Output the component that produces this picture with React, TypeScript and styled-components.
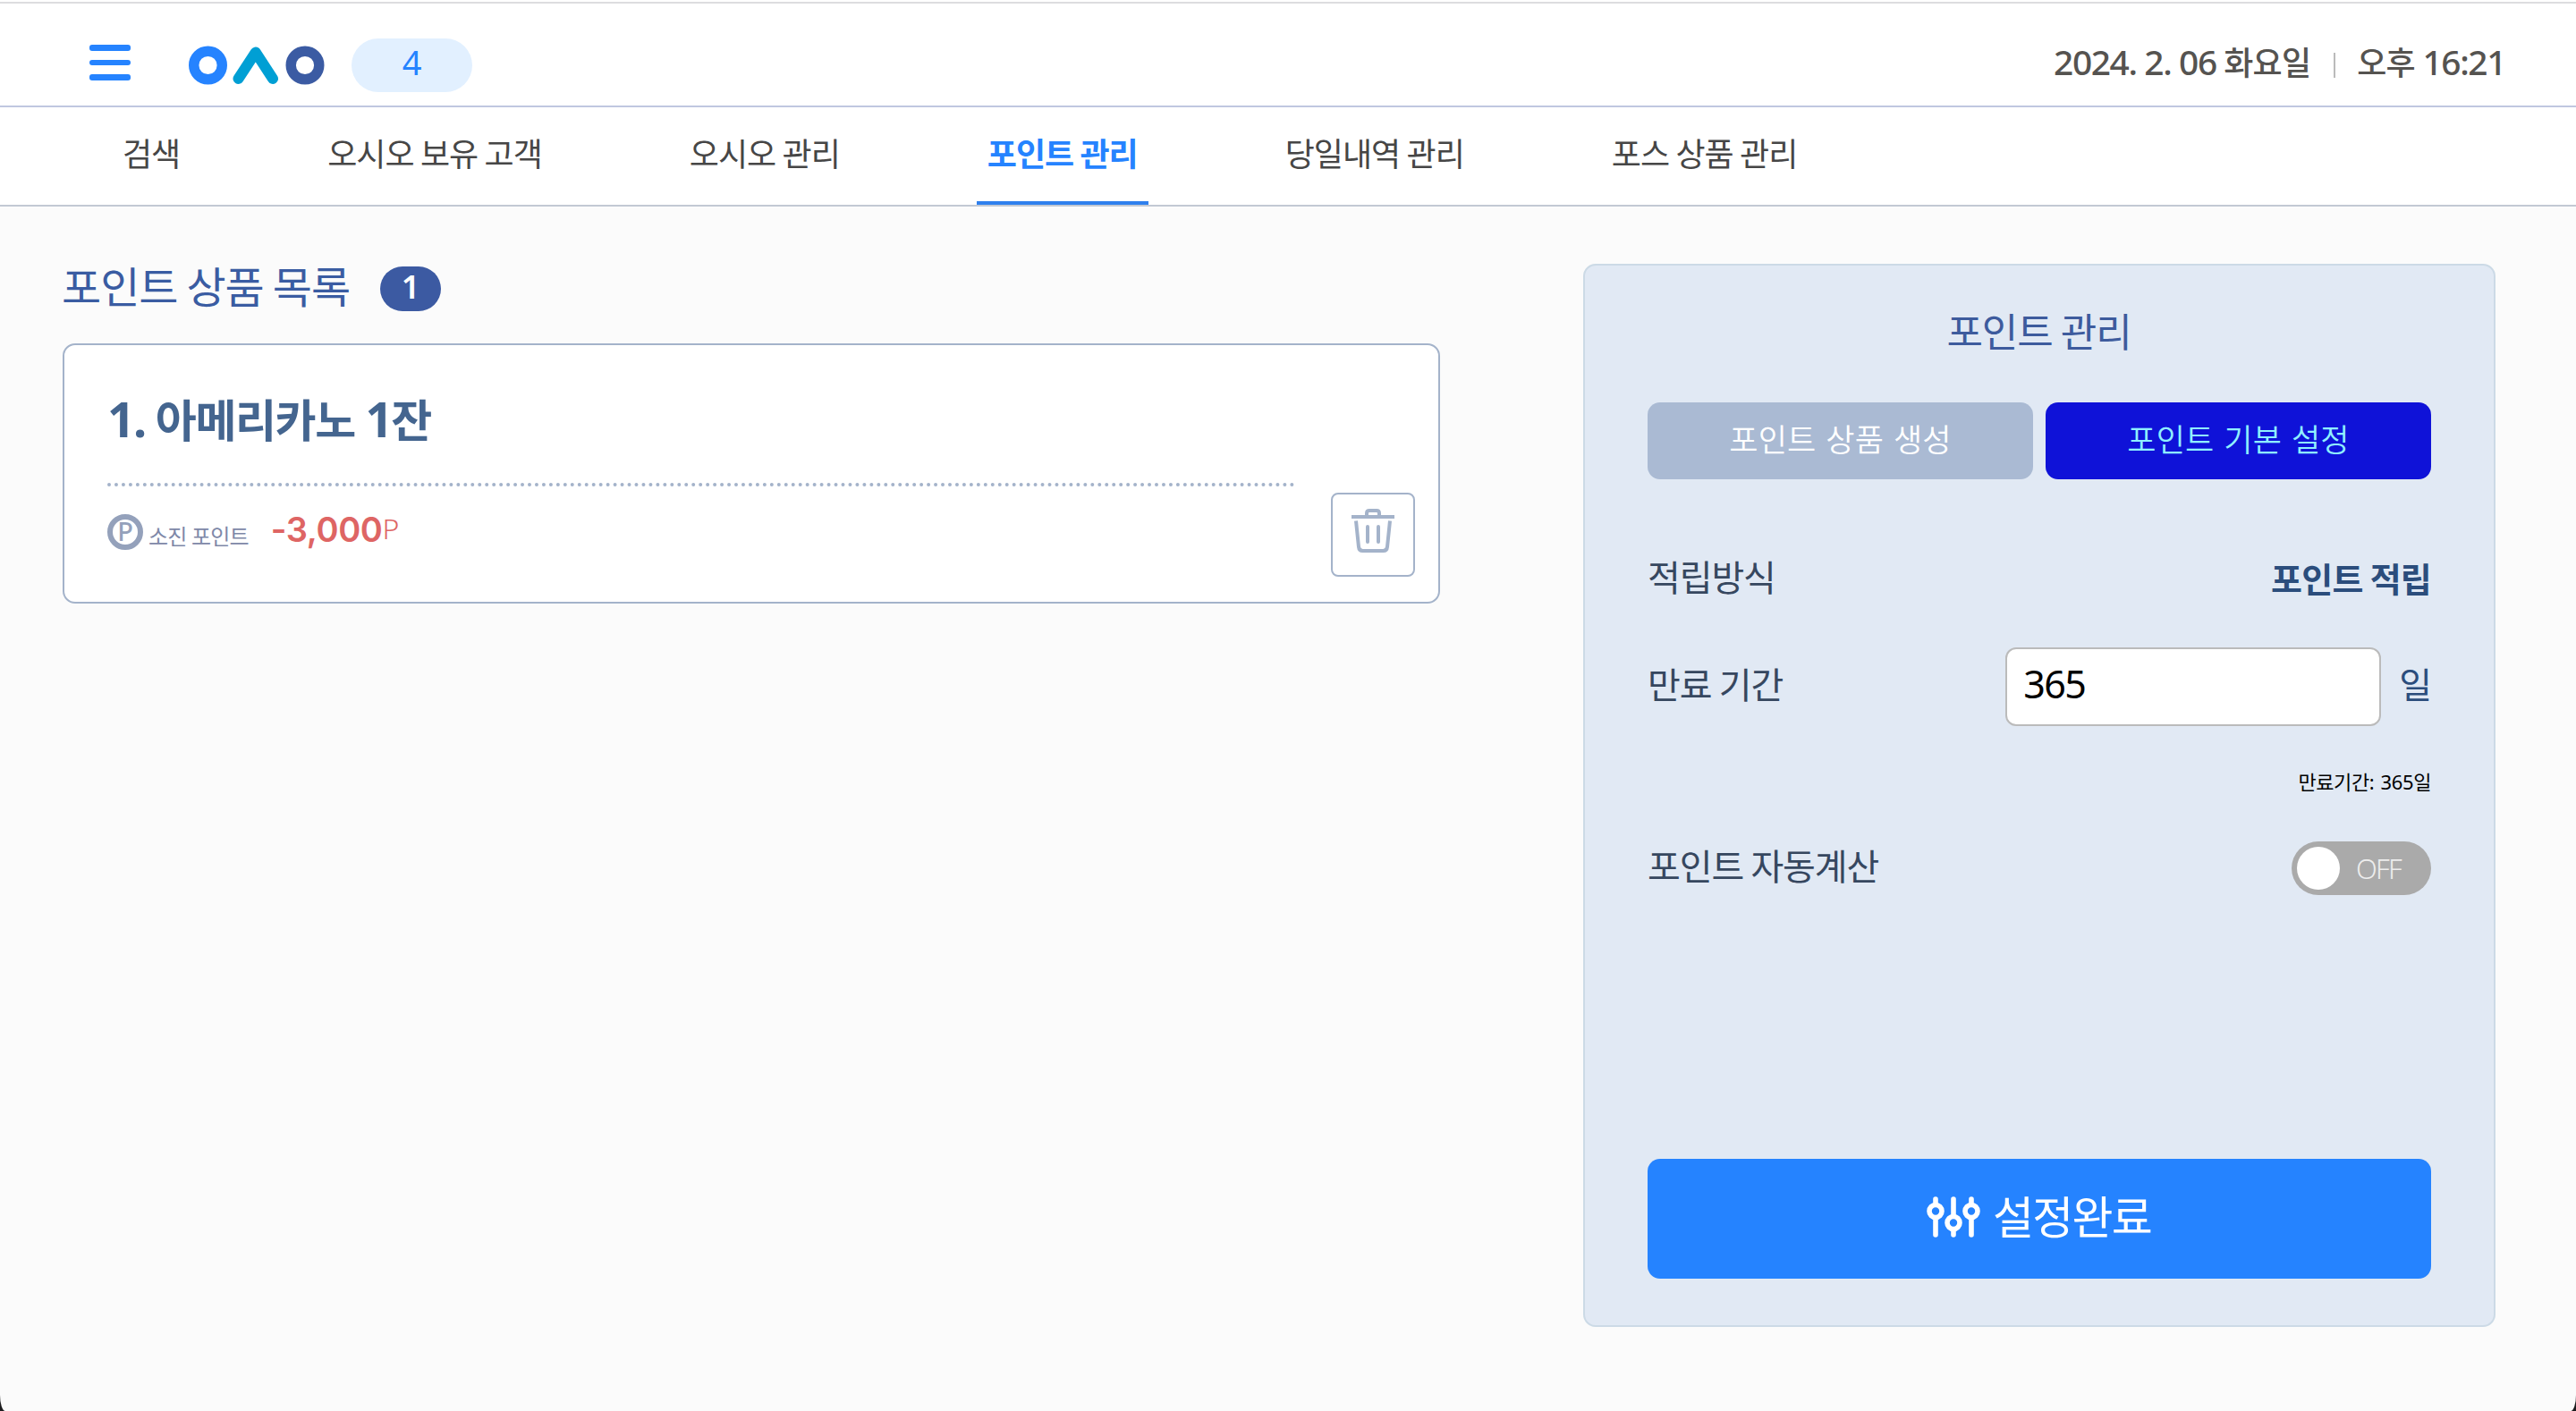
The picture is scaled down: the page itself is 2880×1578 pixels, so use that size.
import { useState } from 'react';
import styled, { createGlobalStyle } from 'styled-components';

const GlobalStyle = createGlobalStyle`
  * {
    box-sizing: border-box;
  }

  body {
    margin: 0;
    background-color: #1c1c1e;
    font-family: 'Noto Sans', 'Noto Sans CJK KR', sans-serif;
  }

  button,
  input {
    font-family: inherit;
  }
`;

const Page = styled.div`
  display: flex;
  flex-direction: column;
  height: 1578px;
  padding-top: 2px;
  overflow: hidden;
  background: linear-gradient(#fff 200px, #fbfbfb 232px);
  border-bottom-left-radius: 6px 18px;
  border-bottom-right-radius: 6px 18px;
`;

const Header = styled.header`
  display: flex;
  align-items: center;
  justify-content: space-between;
  height: 118px;
  padding: 24px 79px 0 100px;
  background-color: #fff;
  border-top: 2px solid #dddddf;
  border-bottom: 2px solid #c0c7e0;
`;

const HeaderLeft = styled.div`
  display: flex;
  align-items: center;
`;

const Menu = styled.button`
  display: flex;
  flex-direction: column;
  gap: 10px;
  width: 46px;
  margin: 0 65px 6px 0;
  padding: 0;
  border: none;
  background: none;
`;

const MenuLine = styled.span`
  height: 6.5px;
  border-radius: 3px;
  background-color: #2583ff;
`;

const CountPill = styled.div`
  width: 135px;
  height: 60px;
  margin-left: 30px;
  border-radius: 30px;
  background-color: #e2f0ff;
  color: #2583ff;
  font-size: 38px;
  line-height: 53px;
  text-align: center;
`;

const DateTime = styled.div`
  display: flex;
  align-items: center;
  padding-bottom: 4px;
  color: #555350;
  font-size: 36px;
  font-weight: 500;
  line-height: 50px;
  letter-spacing: -0.8px;
`;

const Divider = styled.span`
  width: 2px;
  height: 28px;
  margin: 4px 24px 0 26px;
  background-color: #bbb;
`;

// latin digits sit a bit larger than the hangul next to them
const Num = styled.span`
  font-size: 1.08em;
  line-height: 0;
  letter-spacing: -0.036em;
`;

const Nav = styled.nav`
  display: flex;
  gap: 141px;
  height: 111px;
  padding-left: 125px;
  background-color: #fff;
  border-bottom: 2px solid #c2c9d4;
`;

const NavItem = styled.a<{ $active?: boolean }>`
  height: 109px;
  padding: 0 12px;
  border-bottom: 4px solid ${({ $active }) => ($active ? '#2f80ed' : 'transparent')};
  color: ${({ $active }) => ($active ? '#2583ff' : '#464646')};
  font-size: 36px;
  font-weight: ${({ $active }) => ($active ? 700 : 400)};
  line-height: 106px;
  letter-spacing: -1px;
  word-spacing: -1px;
`;

const Main = styled.main`
  display: flex;
  justify-content: space-between;
  padding: 64px 90px 0 70px;
`;

const ListSection = styled.section`
  width: 1540px;
`;

const ListHeading = styled.div`
  display: flex;
  align-items: center;
  height: 56px;
  margin-bottom: 33px;
`;

const ListTitle = styled.h2`
  margin: 0 34px 5px -1px;
  color: #3a5ca2;
  font-size: 48px;
  font-weight: 400;
  line-height: 56px;
  letter-spacing: -1px;
  word-spacing: -1.5px;
`;

const ListCount = styled.span`
  width: 68px;
  height: 50px;
  border-radius: 25px;
  background-color: #3c5aa2;
  color: #fff;
  font-size: 36px;
  font-weight: 600;
  line-height: 46px;
  text-align: center;
`;

const Card = styled.article`
  display: flex;
  align-items: flex-end;
  justify-content: space-between;
  height: 291px;
  padding: 0 26px 28px 48px;
  border: 2px solid #a4b3ca;
  border-radius: 14px;
  background-color: #fff;
`;

const CardBody = styled.div`
  width: 1328px;
  align-self: flex-start;
`;

const CardTitle = styled.h3`
  margin: 0;
  padding: 54px 0 40px;
  border-bottom: 4px dotted #a4b3ca;
  color: #44658f;
  font-size: 50px;
  font-weight: 700;
  line-height: 60px;
  letter-spacing: -1.4px;
`;

const PointRow = styled.div`
  display: flex;
  height: 40px;
  margin-top: 31px;
`;

const PointMark = styled.span`
  width: 40px;
  height: 40px;
  border: 6px solid #94a1bb;
  border-radius: 50%;
  color: #94a1bb;
  font-size: 29px;
  font-weight: 500;
  line-height: 25px;
  text-align: center;
`;

const PointLabel = styled.span`
  margin: 5px 25px 0 6px;
  color: #7e88a8;
  font-size: 24px;
  line-height: 40px;
  letter-spacing: -0.8px;
`;

const PointValue = styled.span`
  color: #de6564;
  font-family: Inter, sans-serif;
  font-size: 38px;
  font-weight: 600;
  line-height: 35px;
  letter-spacing: -0.4px;
`;

const PointUnit = styled.span`
  color: #de6564;
  font-size: 32px;
  font-weight: 350;
  line-height: 32px;
`;

const DeleteButton = styled.button`
  display: flex;
  justify-content: center;
  width: 94px;
  height: 94px;
  padding: 16px 0 0;
  border: 2px solid #a4b3ca;
  border-radius: 8px;
  background-color: #fff;
`;

const Panel = styled.section`
  display: flex;
  flex-direction: column;
  width: 1020px;
  height: 1189px;
  padding: 44px 70px 52px;
  border: 2px solid #ccdae6;
  border-radius: 14px;
  background-color: #e1e9f4;
`;

const PanelTitle = styled.h2`
  margin: 0 0 49px;
  padding-right: 1px;
  color: #3d5b9d;
  font-size: 44px;
  font-weight: 400;
  line-height: 60px;
  letter-spacing: -1.1px;
  word-spacing: -1px;
  text-align: center;
`;

const Tabs = styled.div`
  display: flex;
  gap: 14px;
  margin-bottom: 81px;
`;

const Tab = styled.button<{ $active?: boolean }>`
  flex: 1;
  height: 86px;
  padding: 0 0 8px;
  border: none;
  border-radius: 14px;
  background-color: ${({ $active }) => ($active ? '#0f12d8' : '#aabad3')};
  color: ${({ $active }) => ($active ? '#8ff0ff' : '#fff')};
  font-size: 35px;
  font-weight: 350;
  letter-spacing: 0.2px;
  word-spacing: 1.5px;
`;

const Row = styled.div<{ $height: number; $gap: number }>`
  display: flex;
  align-items: center;
  justify-content: space-between;
  height: ${({ $height }) => $height}px;
  margin-bottom: ${({ $gap }) => $gap}px;
`;

const RowLabel = styled.span`
  padding-bottom: 4px;
  color: #36475f;
  font-size: 40px;
  line-height: 56px;
  letter-spacing: -1.1px;
  word-spacing: -1px;
`;

const RowValue = styled.span`
  padding-bottom: 2px;
  color: #2b4d7c;
  font-size: 38px;
  font-weight: 700;
  line-height: 56px;
  letter-spacing: -0.8px;
  word-spacing: -1px;
`;

const Period = styled.div`
  display: flex;
  align-items: center;
`;

const PeriodInput = styled.input`
  width: 420px;
  height: 88px;
  padding: 0 18px 7px;
  border: 2px solid #bbb;
  border-radius: 12px;
  background-color: #fff;
  color: #000;
  font-size: 43px;
  font-weight: 380;
  letter-spacing: -1.6px;
`;

const PeriodUnit = styled(RowLabel)`
  margin-left: 20px;
  color: #2b4d7c;
`;

const Hint = styled.p`
  margin: 0 0 52px;
  color: #000;
  font-size: 22px;
  line-height: 30px;
  letter-spacing: -0.4px;
  word-spacing: 2px;
  text-align: right;
`;

const Toggle = styled.button`
  display: flex;
  align-items: center;
  gap: 18px;
  width: 156px;
  height: 60px;
  padding: 0 6px;
  border: none;
  border-radius: 30px;
  background-color: #aaa;
`;

const Knob = styled.span`
  width: 48px;
  height: 48px;
  border-radius: 50%;
  background-color: #fff;
`;

const ToggleText = styled.span`
  color: #ededed;
  font-size: 31px;
  font-weight: 350;
  line-height: 61px;
  letter-spacing: -1.7px;
`;

const Submit = styled.button`
  display: flex;
  align-items: center;
  justify-content: center;
  gap: 14px;
  height: 134px;
  margin-top: auto;
  padding: 0 1px 4px 0;
  border: none;
  border-radius: 14px;
  background-color: #2583ff;
  color: #fff;
  font-size: 50px;
  line-height: 60px;
  letter-spacing: -1.7px;
`;

const Logo = () => (
  <svg width="152" height="44" viewBox="0 0 152 44" fill="none">
    <circle cx="21.5" cy="22" r="15.8" stroke="#2583ff" strokeWidth="11.4" />
    <path d="M55.5 37L74.8 7.5L94 37" stroke="#009fd4" strokeWidth="12" strokeLinecap="round" strokeLinejoin="round" />
    <circle cx="130" cy="22" r="15.8" stroke="#3b5ba3" strokeWidth="11.4" />
  </svg>
);

const TrashIcon = () => (
  <svg width="48" height="50" viewBox="0 0 48 50" fill="none" stroke="#a4b3ca" strokeWidth="4">
    <path d="M0 9H48" />
    <path d="M17 8V5Q17 2 20 2H28Q31 2 31 5V8" />
    <path d="M5 13.5L8 42.5Q8.4 47 12.5 47H35.5Q39.6 47 40 42.5L43 13.5" />
    <path d="M18 20V37M30 20V37" strokeLinecap="round" />
  </svg>
);

const SlidersIcon = () => (
  <svg width="60" height="46" viewBox="0 0 60 46" fill="none" stroke="#fff" strokeWidth="5.6" strokeLinecap="round">
    <path d="M10 3V8M10 26V43M30 3V21M30 38V43M50 3V8M50 26V43" />
    <circle cx="10" cy="16.5" r="7" />
    <circle cx="30" cy="29.5" r="7" />
    <circle cx="50" cy="16.5" r="7" />
  </svg>
);

const menus = ['검색', '오시오 보유 고객', '오시오 관리', '포인트 관리', '당일내역 관리', '포스 상품 관리'];

const App = () => {
  const [period, setPeriod] = useState('365');

  return (
    <Page>
      <GlobalStyle />
      <Header>
        <HeaderLeft>
          <Menu>
            <MenuLine />
            <MenuLine />
            <MenuLine />
          </Menu>
          <Logo />
          <CountPill>4</CountPill>
        </HeaderLeft>
        <DateTime>
          <span>
            <Num>2024. 2. 06</Num> 화요일
          </span>
          <Divider />
          <span>
            오후 <Num>16:21</Num>
          </span>
        </DateTime>
      </Header>
      <Nav>
        {menus.map((menu) => (
          <NavItem key={menu} $active={menu === '포인트 관리'}>
            {menu}
          </NavItem>
        ))}
      </Nav>
      <Main>
        <ListSection>
          <ListHeading>
            <ListTitle>포인트 상품 목록</ListTitle>
            <ListCount>1</ListCount>
          </ListHeading>
          <Card>
            <CardBody>
              <CardTitle>
                <Num>1.</Num> 아메리카노 <Num>1</Num>잔
              </CardTitle>
              <PointRow>
                <PointMark>P</PointMark>
                <PointLabel>소진 포인트</PointLabel>
                <PointValue>-3,000</PointValue>
                <PointUnit>P</PointUnit>
              </PointRow>
            </CardBody>
            <DeleteButton>
              <TrashIcon />
            </DeleteButton>
          </Card>
        </ListSection>
        <Panel>
          <PanelTitle>포인트 관리</PanelTitle>
          <Tabs>
            <Tab>포인트 상품 생성</Tab>
            <Tab $active>포인트 기본 설정</Tab>
          </Tabs>
          <Row $height={62} $gap={45}>
            <RowLabel>적립방식</RowLabel>
            <RowValue>포인트 적립</RowValue>
          </Row>
          <Row $height={88} $gap={47}>
            <RowLabel>만료 기간</RowLabel>
            <Period>
              <PeriodInput value={period} onChange={(e) => setPeriod(e.target.value)} />
              <PeriodUnit>일</PeriodUnit>
            </Period>
          </Row>
          <Hint>만료기간: {period}일</Hint>
          <Row $height={60} $gap={0}>
            <RowLabel>포인트 자동계산</RowLabel>
            <Toggle>
              <Knob />
              <ToggleText>OFF</ToggleText>
            </Toggle>
          </Row>
          <Submit>
            <SlidersIcon />
            설정완료
          </Submit>
        </Panel>
      </Main>
    </Page>
  );
};

export default App;
